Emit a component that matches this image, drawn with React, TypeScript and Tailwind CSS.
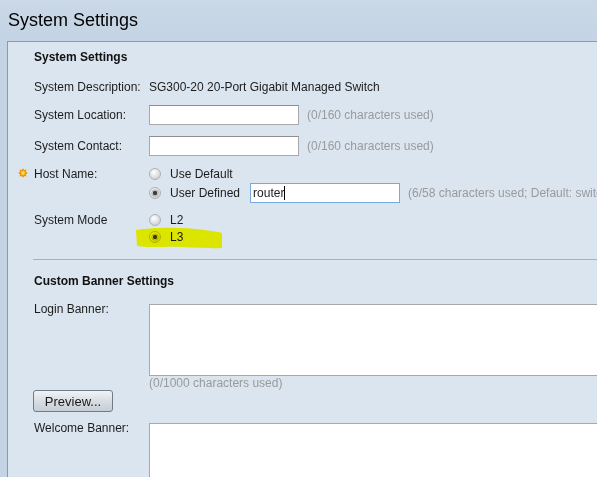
import React from "react";

function Radio({ checked, id }: { checked?: boolean; id: string }) {
  return (
    <svg width="12" height="12" viewBox="0 0 12 12" className="shrink-0">
      <defs>
        <radialGradient id={id} cx="40%" cy="35%" r="70%">
          <stop offset="0" stopColor="#ffffff" />
          <stop offset="1" stopColor="#c9ccd1" />
        </radialGradient>
      </defs>
      <circle cx="6" cy="6" r="5.5" fill={`url(#${id})`} stroke="#adb1b6" strokeWidth="1" />
      {checked && <circle cx="6" cy="6" r="2.2" fill="#3b3b3b" />}
      {checked && <circle cx="6" cy="6" r="3.2" fill="none" stroke="#9a9a9a" strokeWidth="0.8" />}
    </svg>
  );
}

function Gear() {
  const pts: string[] = [];
  for (let i = 0; i < 16; i++) {
    const a = (Math.PI * 2 * i) / 16 - Math.PI / 2;
    const r = i % 2 === 0 ? 4.8 : 3.2;
    pts.push(`${(5 + r * Math.cos(a)).toFixed(2)},${(5 + r * Math.sin(a)).toFixed(2)}`);
  }
  return (
    <svg width="10" height="10" viewBox="0 0 10 10" className="absolute left-[-16px] top-[4px]">
      <polygon points={pts.join(" ")} fill="#f0900a" />
      <circle cx="5" cy="5" r="2.4" fill="#f6c21a" />
      <circle cx="5" cy="5" r="1.2" fill="#fde37a" />
    </svg>
  );
}

export default function App() {
  return (
    <div className="relative w-[597px] h-[477px] overflow-hidden bg-[#c5d4e4] font-['Liberation_Sans',Arial,sans-serif] text-[12px] leading-[14px] text-[#1c1c1c]">
      <div className="h-[41px] pl-[8px] pt-[9px] text-[18px] leading-[22px] text-black bg-gradient-to-b from-[#cad8e7] to-[#c4d4e4]">
        System Settings
      </div>
      <div className="ml-[7px] w-[700px] h-[436px] bg-[#dbe5ef] border-t border-l border-[#8b9bad] pl-[26px]">
        <div className="pt-[8px] h-[22px] font-bold text-[#111]">System Settings</div>

        <div className="mt-[16px] h-[14px] flex">
          <div className="w-[115px]">System Description:</div>
          <div>SG300-20 20-Port Gigabit Managed Switch</div>
        </div>

        <div className="mt-[11px] h-[20px] flex items-center">
          <div className="w-[115px]">System Location:</div>
          <div className="w-[150px] h-[20px] bg-white border border-[#a8a8a8] border-t-[#8e8e8e]" />
          <div className="ml-[8px] text-[#9a9a9a]">(0/160 characters used)</div>
        </div>

        <div className="mt-[11px] h-[20px] flex items-center">
          <div className="w-[115px]">System Contact:</div>
          <div className="w-[150px] h-[20px] bg-white border border-[#a8a8a8] border-t-[#8e8e8e]" />
          <div className="ml-[8px] text-[#9a9a9a]">(0/160 characters used)</div>
        </div>

        <div className="mt-[8px] flex">
          <div className="relative w-[115px] h-[19px] flex items-center">
            <Gear />
            Host Name:
          </div>
          <div className="flex flex-col">
            <div className="h-[19px] flex items-center gap-[9px]">
              <Radio id="r1" />
              <span>Use Default</span>
            </div>
            <div className="h-[20px] flex items-center">
              <Radio id="r2" checked />
              <span className="ml-[9px]">User Defined</span>
              <div className="ml-[10px] w-[150px] h-[20px] bg-white border border-[#7aa8da] flex items-center pl-[2px]">
                <span>router</span>
                <span className="w-px h-[14px] bg-black" />
              </div>
              <div className="ml-[8px] whitespace-nowrap text-[#9a9a9a]">(6/58 characters used; Default: switch)</div>
            </div>
          </div>
        </div>

        <div className="mt-[8px] flex">
          <div className="w-[115px] h-[17px] flex items-center">System Mode</div>
          <div className="flex flex-col">
            <div className="h-[17px] flex items-center gap-[9px]">
              <Radio id="r3" />
              <span>L2</span>
            </div>
            <div className="h-[17px] flex items-center gap-[9px]">
              <Radio id="r4" checked />
              <span>L3</span>
            </div>
          </div>
        </div>

        <div className="mt-[14px] -ml-px h-px bg-[#a6b1bd]" />

        <div className="mt-[14px] h-[14px] font-bold text-[#111]">Custom Banner Settings</div>

        <div className="mt-[16px] flex items-start">
          <div className="w-[115px] leading-[10px]">Login Banner:</div>
          <div className="w-[470px] h-[72px] bg-white border border-[#a9a9a9]" />
        </div>
        <div className="h-[14px] pl-[115px] text-[#9a9a9a]">(0/1000 characters used)</div>

        <div className="-ml-px w-[80px] h-[22px] rounded-[3px] border border-[#6f7b87] bg-gradient-to-b from-[#f1f3f5] via-[#d9dee4] to-[#c6cdd5] flex items-center justify-center text-[13px] leading-[15px] text-[#1a1a1a]">
          Preview...
        </div>

        <div className="mt-[11px] flex items-start">
          <div className="w-[115px] leading-[10px]">Welcome Banner:</div>
          <div className="w-[470px] h-[80px] bg-white border border-[#a9a9a9]" />
        </div>
      </div>

      <svg className="absolute left-[134px] top-[225px] mix-blend-multiply pointer-events-none" width="92" height="26" viewBox="0 0 92 26">
        <path d="M2 5 C 20 2, 50 2, 70 5 C 80 6, 86 7, 88 8 L 88 23 C 70 24, 45 21, 30 22 C 18 22, 8 22, 3 21 Z" fill="#ffff00" />
      </svg>
    </div>
  );
}
